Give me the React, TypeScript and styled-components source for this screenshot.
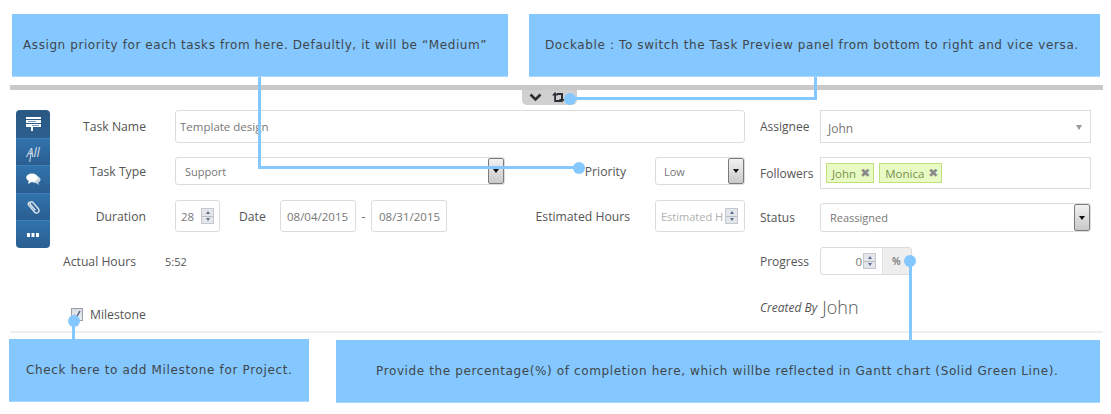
import React from "react";
import styled, { createGlobalStyle } from "styled-components";

const Global = createGlobalStyle`
  html, body { margin: 0; padding: 0; background: #fff; }
  body { font-family: "Open Sans", "Liberation Sans", sans-serif; color: #555; font-size: 12px; }
`;

const BLUE = "#84c8ff";

const Page = styled.div`
  position: relative;
  width: 1111px;
  height: 414px;
  overflow: hidden;
  background: #fff;
`;

const CalloutRow = styled.div<{ $top: number }>`
  display: flex;
  align-items: flex-start;
  margin-top: ${(p) => p.$top}px;
`;

const Callout = styled.div<{ $left: number; $width: number; $indent: number; $space: number; $mt?: number }>`
  margin-left: ${(p) => p.$left}px;
  margin-top: ${(p) => p.$mt ?? 0}px;
  width: ${(p) => p.$width}px;
  height: 63px;
  box-sizing: border-box;
  padding-left: ${(p) => p.$indent}px;
  display: flex;
  align-items: center;
  background: ${BLUE};
  border-bottom: 1px solid #a9d8ff;
  font-family: "DejaVu Sans", sans-serif;
  font-size: 12px;
  letter-spacing: ${(p) => p.$space}px;
  color: #40464c;
  white-space: nowrap;
`;

const Divider = styled.div`
  position: relative;
  margin: 8px 8px 0 10px;
  height: 5px;
  background: #c9c9c9;
`;

const DockHandle = styled.div`
  position: absolute;
  left: 512px;
  top: 5px;
  width: 55px;
  height: 15px;
  box-sizing: border-box;
  padding-left: 7px;
  display: flex;
  align-items: center;
  gap: 10px;
  background: #d0d0d0;
  border-radius: 0 0 5px 5px;
`;

const Form = styled.div`
  display: flex;
  height: 221px;
  margin-top: 20px;
`;

const LeftPane = styled.div`
  width: 745px;
  display: flex;
  flex-direction: column;
`;

const TopPart = styled.div`
  display: flex;
  padding-left: 16px;
`;

const Sidebar = styled.div`
  width: 34px;
  height: 138px;
  border-radius: 4px;
  overflow: hidden;
  display: flex;
  flex-direction: column;
  flex: none;
`;

const SideItem = styled.div<{ $first?: boolean }>`
  flex: 1;
  display: flex;
  align-items: center;
  justify-content: center;
  color: #fff;
  border-top: 1px solid ${(p) => (p.$first ? "transparent" : "#3f7fb8")};
  background: ${(p) =>
    p.$first
      ? "linear-gradient(#2a5882, #2c5f8f)"
      : "linear-gradient(#3173ad, #2a5e90)"};
`;

const AllText = styled.span`
  position: relative;
  font-family: "Open Sans", sans-serif;
  font-style: italic;
  font-size: 13px;
  letter-spacing: -0.3px;
  color: #cfdbe6;
  &::after {
    content: "";
    position: absolute;
    left: 3px;
    top: 8px;
    width: 1px;
    height: 11px;
    background: #cfdbe6;
    transform: rotate(8deg);
  }
`;

const Rows = styled.div`
  flex: 1;
  display: flex;
  flex-direction: column;
`;

const Row = styled.div<{ $h: number; $mt?: number }>`
  display: flex;
  align-items: center;
  height: ${(p) => p.$h}px;
  margin-top: ${(p) => p.$mt ?? 0}px;
`;

const Label = styled.div<{ $w?: number; $ml?: number; $mr?: number; $left?: boolean }>`
  width: ${(p) => p.$w ?? 96}px;
  margin-left: ${(p) => p.$ml ?? 0}px;
  margin-right: ${(p) => p.$mr ?? 29}px;
  flex: none;
  text-align: ${(p) => (p.$left ? "left" : "right")};
  font-size: 12.2px;
  color: #555;
  white-space: nowrap;
`;

const Field = styled.div<{ $w?: number; $square?: boolean; $pl?: number; $pt?: number; $fs?: number; $muted?: boolean; $end?: boolean }>`
  position: relative;
  box-sizing: border-box;
  width: ${(p) => (p.$w ? `${p.$w}px` : "auto")};
  flex: ${(p) => (p.$w ? "none" : "1")};
  height: 100%;
  padding-left: ${(p) => p.$pl ?? 7}px;
  padding-top: ${(p) => p.$pt ?? 0}px;
  padding-right: ${(p) => (p.$end ? 49 : 0)}px;
  display: flex;
  align-items: center;
  justify-content: ${(p) => (p.$end ? "flex-end" : "flex-start")};
  background: #fff;
  border: 1px solid #dcdcdc;
  border-radius: ${(p) => (p.$square ? 0 : 3)}px;
  font-size: ${(p) => p.$fs ?? 11}px;
  color: ${(p) => (p.$muted ? "#b0b0b0" : "#777")};
  white-space: nowrap;
  overflow: hidden;
`;

const SelectButton = styled.div`
  position: absolute;
  right: 0;
  top: 0;
  bottom: 0;
  width: 16px;
  box-sizing: border-box;
  border: 1px solid #7b7b7b;
  border-radius: 2px;
  background: linear-gradient(#f1f1f1, #c9c9c9);
  display: flex;
  align-items: center;
  justify-content: center;
  &::after {
    content: "";
    border-left: 3.5px solid transparent;
    border-right: 3.5px solid transparent;
    border-top: 4px solid #111;
  }
`;

const Spinner = styled.div<{ $right: number }>`
  position: absolute;
  right: ${(p) => p.$right}px;
  top: 50%;
  transform: translateY(-50%);
  width: 13px;
  height: 16px;
  box-sizing: border-box;
  border: 1px solid #c4c8d0;
  background: #e4e6ea;
  display: flex;
  flex-direction: column;
`;

const SpinHalf = styled.div<{ $down?: boolean }>`
  flex: 1;
  display: flex;
  align-items: center;
  justify-content: center;
  border-top: ${(p) => (p.$down ? "1px solid #b8bcc4" : "none")};
  &::after {
    content: "";
    border-left: 2.5px solid transparent;
    border-right: 2.5px solid transparent;
    ${(p) => (p.$down ? "border-top: 3px solid #5a6d96;" : "border-bottom: 3px solid #5a6d96;")}
  }
`;

const Dash = styled.div`
  width: 15px;
  flex: none;
  text-align: center;
  color: #666;
`;

const PlainRow = styled.div<{ $h: number; $ml: number; $mt: number }>`
  display: flex;
  align-items: center;
  height: ${(p) => p.$h}px;
  margin-left: ${(p) => p.$ml}px;
  margin-top: ${(p) => p.$mt}px;
`;

const Value = styled.div<{ $ml: number }>`
  margin-left: ${(p) => p.$ml}px;
  font-size: 11px;
  color: #555;
`;

const Check = styled.div`
  width: 12px;
  height: 13px;
  box-sizing: border-box;
  border: 1px solid #9aa0aa;
  background: linear-gradient(#d8dbe2, #eef0f3);
  margin-right: 7px;
  display: flex;
  align-items: center;
  justify-content: center;
`;

const RightPane = styled.div`
  width: 331px;
  margin-left: 15px;
  display: flex;
  flex-direction: column;
`;

const RightRow = styled.div<{ $h: number; $mt?: number }>`
  display: flex;
  align-items: center;
  height: ${(p) => p.$h}px;
  margin-top: ${(p) => p.$mt ?? 0}px;
`;

const RightLabel = styled.div`
  width: 60px;
  flex: none;
  font-size: 12px;
  color: #555;
  white-space: nowrap;
`;

const Caret = styled.div`
  position: absolute;
  right: 8px;
  top: 14px;
  border-left: 3.5px solid transparent;
  border-right: 3.5px solid transparent;
  border-top: 5px solid #999;
`;

const Chips = styled.div`
  display: flex;
  gap: 5px;
  padding-left: 5px;
`;

const Chip = styled.div`
  height: 20px;
  box-sizing: border-box;
  padding: 0 3px 0 5px;
  display: flex;
  align-items: center;
  gap: 4px;
  background: #e8fbc4;
  border: 1px solid #bfe07a;
  font-size: 11.5px;
  color: #7b8f4e;
`;

const ChipX = styled.span`
  font-family: "DejaVu Sans", sans-serif;
  font-size: 12px;
  font-weight: bold;
  color: #8a8a8a;
`;

const ProgressAddon = styled.div`
  position: absolute;
  right: 0;
  top: 0;
  bottom: 0;
  width: 29px;
  padding-left: 9px;
  box-sizing: border-box;
  display: flex;
  align-items: center;
  background: #eeeeee;
  border-left: 1px solid #e2e2e2;
  font-size: 10px;
  font-weight: 600;
  color: #777;
`;

const CreatedBy = styled.em`
  font-size: 12px;
  color: #555;
  margin-right: 5px;
`;

const CreatedName = styled.span`
  font-size: 18px;
  font-weight: 300;
  color: #555;
`;

const Hr = styled.div`
  height: 2px;
  margin: 0 8px 0 10px;
  background: #eeeeee;
`;

const Wire = styled.div<{ $x: number; $y: number; $w: number; $h: number }>`
  position: absolute;
  left: ${(p) => p.$x}px;
  top: ${(p) => p.$y}px;
  width: ${(p) => p.$w}px;
  height: ${(p) => p.$h}px;
  background: ${BLUE};
`;

const Dot = styled.div<{ $x: number; $y: number }>`
  position: absolute;
  left: ${(p) => p.$x - 6}px;
  top: ${(p) => p.$y - 6}px;
  width: 12px;
  height: 12px;
  border-radius: 50%;
  background: ${BLUE};
`;

const Spin = ({ right }: { right: number }) => (
  <Spinner $right={right}>
    <SpinHalf />
    <SpinHalf $down />
  </Spinner>
);

export default function App() {
  return (
    <Page>
      <Global />
      <CalloutRow $top={14}>
        <Callout $left={12} $width={496} $indent={11} $space={0.59}>
          Assign priority for each tasks from here. Defaultly, it will be “Medium”
        </Callout>
        <Callout $left={21} $width={571} $indent={16} $space={0.61}>
          Dockable : To switch the Task Preview panel from bottom to right and vice versa.
        </Callout>
      </CalloutRow>

      <Divider>
        <DockHandle>
          <svg width="13" height="9" viewBox="0 0 13 9">
            <path d="M1.5 1.5 L6.5 6.5 L11.5 1.5" fill="none" stroke="#2b2f33" strokeWidth="2.6" />
          </svg>
          <svg width="13" height="11" viewBox="0 0 13 11" fill="#2b2f33">
            <path d="M3 0 L6 3.5 H4 V8 H9 V10 H2.2 V3.5 H0 Z" />
            <path d="M5 1 H11 V7 H13 L10 10.5 L7 7 H9 V3 H5 Z" />
          </svg>
        </DockHandle>
      </Divider>

      <Form>
        <LeftPane>
          <TopPart>
            <Sidebar>
              <SideItem $first>
                <svg width="15" height="14" viewBox="0 0 15 14" fill="#fff">
                  <rect x="0" y="0" width="15" height="2" />
                  <rect x="0" y="3" width="15" height="3" />
                  <rect x="0" y="7" width="15" height="3" />
                  <rect x="2" y="4" width="8" height="1" fill="#7fa0bf" />
                  <rect x="6" y="8" width="7" height="1" fill="#7fa0bf" />
                  <rect x="5" y="10" width="2" height="4" />
                </svg>
              </SideItem>
              <SideItem>
                <AllText>All</AllText>
              </SideItem>
              <SideItem>
                <svg width="15" height="12" viewBox="0 0 15 12">
                  <ellipse cx="9.5" cy="6.5" rx="5" ry="3.6" fill="#cfd9e4" />
                  <path d="M10 10 L13 12 L12 8.5 Z" fill="#cfd9e4" />
                  <ellipse cx="6" cy="4.6" rx="5.8" ry="4.2" fill="#fff" />
                  <path d="M3 7.5 L2 11 L6.5 8.5 Z" fill="#fff" />
                </svg>
              </SideItem>
              <SideItem>
                <svg width="13" height="14" viewBox="0 0 13 14" fill="none" stroke="#d5dee8" strokeWidth="1.5">
                  <path d="M2.5 1.8 C1 3 1 4.4 2 5.6 L7.5 12 C8.6 13.3 10.3 13.2 11.3 12.2 C12.2 11.2 12.2 9.8 11.2 8.6 L6 2.5 C5.2 1.6 4 1.6 3.4 2.3 C2.8 3 2.9 3.9 3.6 4.7 L8.4 10.2" />
                </svg>
              </SideItem>
              <SideItem>
                <svg width="12" height="4" viewBox="0 0 12 4" fill="#fff">
                  <rect x="0" y="0" width="3" height="4" />
                  <rect x="4.5" y="0" width="3" height="4" />
                  <rect x="9" y="0" width="3" height="4" />
                </svg>
              </SideItem>
            </Sidebar>
            <Rows>
              <Row $h={33}>
                <Label>Task Name</Label>
                <Field $pl={4} $fs={11.5}>Template design</Field>
              </Row>
              <Row $h={28} $mt={14}>
                <Label>Task Type</Label>
                <Field $w={330} $pl={9}>
                  Support
                  <SelectButton />
                </Field>
                <Label $w={46} $ml={75} $mr={29}>Priority</Label>
                <Field $w={90} $pl={8}>
                  Low
                  <SelectButton />
                </Field>
              </Row>
              <Row $h={32} $mt={15}>
                <Label>Duration</Label>
                <Field $w={45} $pl={5} $fs={11.5}>
                  28
                  <Spin right={5} />
                </Field>
                <Label $w={41} $ml={19} $mr={0} $left>Date</Label>
                <Field $w={76} $pl={6} $fs={11.5}>08/04/2015</Field>
                <Dash>-</Dash>
                <Field $w={76} $pl={7} $fs={11.5}>08/31/2015</Field>
                <Label $w={100} $ml={83} $mr={25}>Estimated Hours</Label>
                <Field $w={90} $pl={5} $muted>
                  Estimated H
                  <Spin right={6} />
                </Field>
              </Row>
            </Rows>
          </TopPart>
          <PlainRow $h={16} $ml={63} $mt={5}>
            <Label $w={73} $mr={0} $left>Actual Hours</Label>
            <Value $ml={29}>5:52</Value>
          </PlainRow>
          <PlainRow $h={16} $ml={71} $mt={37}>
            <Check>
              <svg width="8" height="9" viewBox="0 0 8 9">
                <path d="M1 5 L3 8 L7 1" fill="none" stroke="#4a5a78" strokeWidth="1.4" />
              </svg>
            </Check>
            <Label $w={60} $mr={0} $left>Milestone</Label>
          </PlainRow>
        </LeftPane>

        <RightPane>
          <RightRow $h={33}>
            <RightLabel>Assignee</RightLabel>
            <Field $square $pl={7} $pt={3} $fs={12}>
              John
              <Caret />
            </Field>
          </RightRow>
          <RightRow $h={32} $mt={14}>
            <RightLabel>Followers</RightLabel>
            <Field $square $pl={0}>
              <Chips>
                <Chip>
                  John
                  <ChipX>✖</ChipX>
                </Chip>
                <Chip>
                  Monica
                  <ChipX>✖</ChipX>
                </Chip>
              </Chips>
            </Field>
          </RightRow>
          <RightRow $h={29} $mt={14}>
            <RightLabel>Status</RightLabel>
            <Field $pl={9}>
              Reassigned
              <SelectButton />
            </Field>
          </RightRow>
          <RightRow $h={28} $mt={15}>
            <RightLabel>Progress</RightLabel>
            <Field $w={92} $fs={11.5} $end>
              0
              <Spin right={35} />
              <ProgressAddon>%</ProgressAddon>
            </Field>
          </RightRow>
          <RightRow $h={24} $mt={20}>
            <CreatedBy>Created By</CreatedBy>
            <CreatedName>John</CreatedName>
          </RightRow>
        </RightPane>
      </Form>

      <Hr />

      <CalloutRow $top={6}>
        <Callout $left={9} $width={300} $indent={17} $space={0.65}>
          Check here to add Milestone for Project.
        </Callout>
        <Callout $left={27} $width={764} $indent={40} $space={0.62} $mt={1}>
          Provide the percentage(%) of completion here, which willbe reflected in Gantt chart (Solid Green Line).
        </Callout>
      </CalloutRow>

      <Wire $x={258} $y={77} $w={3} $h={92} />
      <Wire $x={258} $y={166} $w={322} $h={3} />
      <Dot $x={579} $y={168} />
      <Wire $x={814} $y={77} $w={3} $h={23} />
      <Wire $x={570} $y={97} $w={247} $h={3} />
      <Dot $x={570} $y={99} />
      <Wire $x={72} $y={321} $w={3} $h={18} />
      <Dot $x={74} $y={321} />
      <Wire $x={909} $y={261} $w={3} $h={79} />
      <Dot $x={910} $y={261} />
    </Page>
  );
}
